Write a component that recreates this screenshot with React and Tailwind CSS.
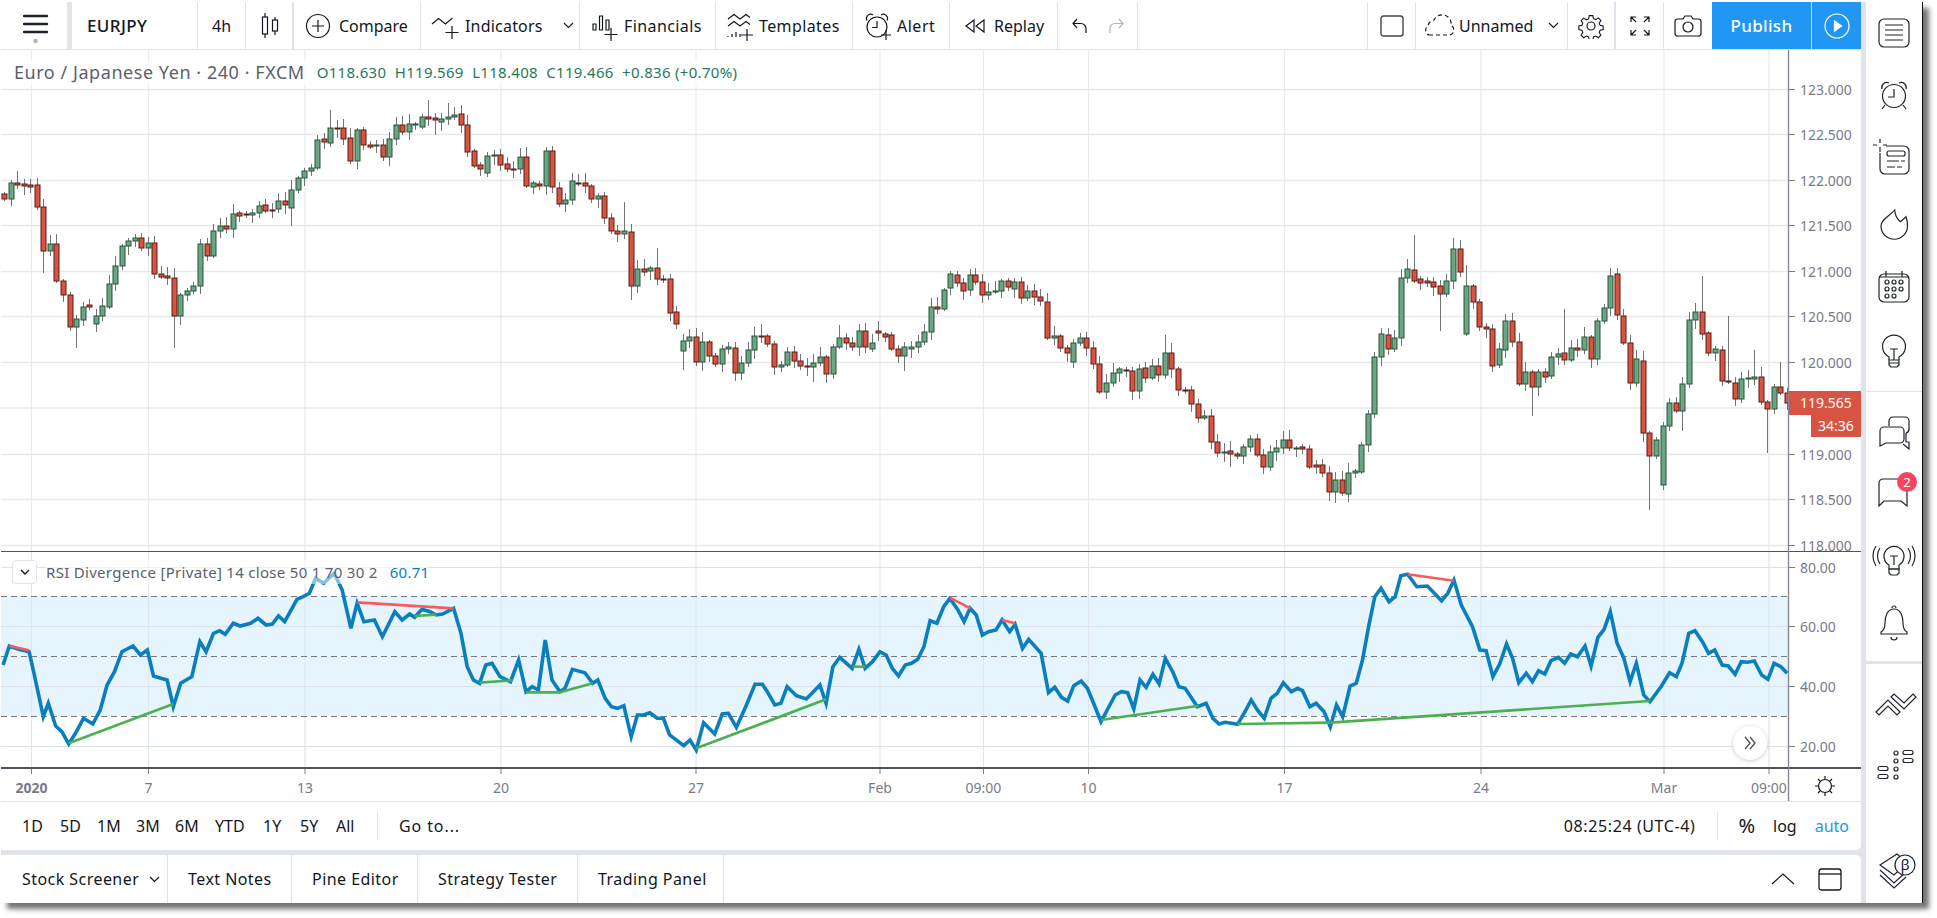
import React from "react";

/* candle data: top,bottom,colour — page pixel y */
const LEFT = "r194-199 g183-199 r183-185 r184-186 r185-187 r185-207 r207-251 g244-251 r244-281 r281-295 r295-327 g319-327 g307-320 r305-307 g316-324 g306-316 g284-307 g266-284 g246-266 g241-246 g238-241 r238-248 g243-248 r243-274 r274-277 r276-278 r278-316 g295-316 g291-295 g286-291 g244-286 r244-256 g231-256 g226-231 r226-229 g214-229 r213-216 r214-215 g213-215 g206-213 r205-211 r210-211 g201-209 r201-205 g190-208 g178-190 g171-178 g168-171 g140-168 r139-142 g128-143 r128-129 r128-139 r138-161 g130-161 r130-145 r145-147 g145-146 r145-157 g139-157 g125-139 r125-132 g124-132 g124-125 g117-127 r117-119 r118-120 g119-122 g117-119 g115-117 r114-125 r125-152 r151-166 r165-169 g156-173 g155-156 r155-165 r164-169 r169-170 g157-169 r157-186 g183-187 r184-186 g151-186 r151-187 r188-204 g200-204 g181-200 r183-184 r183-186 r186-199 g196-199 r196-218 r218-231 r231-234 g231-234 r232-286 g269-286 r269-272 g268-271 r268-279 r279-280 r279-313 r312-324 g341-351 g337-341 r337-362 g342-362 r342-356 r356-364 g349-364 g347-349 r348-373 g363-373 g350-363 g336-350 r336-337 r336-344 r344-367 g365-367 g352-365 r352-361 r361-366 r366-367 g363-367 g357-363 r357-374 g347-374 g338-347 r338-343 r343-347 g331-347 r331-347 g343-349 r331-333 r334-337 r335-349 r349-356 g347-356 g347-349 g342-347 g332-342 g307-332 r307-309 g290-309 g274-288 r275-283 r283-291 g275-290"
  .split(" ");
const RIGHT = "r275-282 r282-295 g292-295 g291-292 g281-291 r281-287 g282-289 r282-298 g291-298 r291-297 r297-301 r302-338 g336-338 r336-348 r348-353 g343-362 g338-343 r338-348 r348-364 r364-392 g383-392 g373-383 g369-373 r370-371 r371-391 g369-391 r368-378 g366-378 r366-375 g353-375 r353-369 r369-390 r390-391 r390-404 r404-418 g416-418 r416-442 r442-453 g452-453 r451-454 r454-456 g447-456 g439-447 r439-455 r455-467 g452-467 g448-452 g440-448 r440-448 g448-449 r447-449 r449-467 r465-467 r465-473 r473-492 g480-492 r480-493 g473-494 g471-473 g445-472 g414-445 g357-414 g334-357 r335-349 g338-349 g278-338 g269-278 r270-281 r279-283 r281-283 r282-287 r286-294 g281-294 g249-281 r249-272 g286-334 r286-302 r302-327 r327-329 r329-366 g349-365 g321-350 r321-342 r342-384 g372-384 r372-387 g372-387 r372-377 g357-376 g354-357 r353-360 g348-360 r348-350 g337-350 r337-359 g321-359 g308-321 g276-308 r274-315 r316-343 r343-383 g359-383 r361-433 r433-456 g440-456 g426-485 g403-426 r403-411 g384-411 g320-384 g312-320 r312-334 r333-353 g349-353 r350-381 r381-382 r383-399 g379-399 g378-379 g377-379 r377-402 r402-409 g387-409 r387-393 r393-403"
  .split(" ");

const parse = (s) => {
  const [a, b] = s.slice(1).split("-").map(Number);
  return { c: s[0], top: a, bot: b };
};
const candles = [
  ...LEFT.map((s, i) => ({ ...parse(s), x: 4.3 + (i * (969.7 - 4.3)) / (LEFT.length - 1) })),
  ...RIGHT.map((s, i) => ({ ...parse(s), x: 975 + (i * (1787 - 975)) / (RIGHT.length - 1) })),
].map((d, i) => ({
  ...d,
  hi: d.top - (2 + ((i * 37) % 9)),
  lo: d.bot + (2 + ((i * 53) % 8)),
}));

const Lz = (x) => x / 1.616;
const Rz = (x) => 970 + x / 1.618;
const extras = [
  [Lz(69), "d", 273], [Lz(122), "d", 348], [Lz(281), "d", 348], [Lz(25), "u", 171], [Lz(470), "d", 226],
  [Lz(533), "u", 110], [Lz(690), "u", 100], [Lz(702), "d", 135], [Lz(722), "u", 103], [Lz(889), "u", 146],
  [Lz(1008), "u", 202], [Lz(1061), "u", 248], [Lz(1020), "d", 300], [Lz(1103), "d", 370], [Lz(1230), "u", 324],
  [Lz(1335), "d", 383], [Lz(1314), "d", 382], [Lz(1190), "d", 381], [Lz(1461), "d", 371], [Lz(1356), "u", 325],
  [Rz(719), "u", 235], [Rz(782), "u", 238], [Rz(804), "u", 265], [Rz(963), "u", 309], [Rz(317), "u", 335],
  [Rz(910), "d", 416], [Rz(1101), "d", 510], [Rz(1120), "d", 490], [Rz(1291), "d", 453], [Rz(591), "d", 503],
  [Rz(1035), "u", 268], [Rz(1185), "u", 276], [Rz(763), "d", 331], [Rz(1228), "u", 316], [Rz(1269), "u", 350],
  [Rz(1312), "u", 362], [Rz(264), "d", 400], [Rz(424), "d", 467], [Rz(1152), "d", 431],
];
extras.forEach(([x, k, y]) => {
  let best = candles[0];
  candles.forEach((c) => {
    if (Math.abs(c.x - x) < Math.abs(best.x - x)) best = c;
  });
  if (k === "u") best.hi = y;
  else best.lo = y;
});

const rsiL = [[5,375],[15,318],[30,328],[47,335],[55,400],[70,530],[78,490],[90,558],[100,575],[111,612],[122,580],[135,535],[150,552],[162,510],[173,435],[185,395],[197,335],[215,318],[227,345],[238,330],[248,408],[260,415],[270,420],[280,500],[292,430],[310,410],[323,305],[333,335],[345,280],[355,272],[364,283],[377,250],[388,258],[405,250],[417,235],[430,255],[440,252],[450,228],[460,245],[480,178],[490,170],[500,160],[510,115],[523,130],[540,100],[553,150],[567,265],[577,190],[588,245],[605,240],[618,290],[638,215],[650,240],[662,222],[670,232],[682,208],[695,215],[705,225],[715,222],[733,205],[745,280],[755,380],[765,420],[775,430],[785,375],[795,370],[808,410],[825,425],[838,360],[850,455],[860,440],[870,450],[881,300],[892,420],[905,455],[913,445],[925,388],[945,398],[958,430],[966,420],[978,475],[988,500],[998,505],[1008,497],[1020,590],[1030,525],[1040,525],[1050,518],[1062,535],[1072,535],[1082,585],[1105,617],[1115,600],[1125,630],[1137,548],[1155,582],[1167,522],[1177,520],[1190,562],[1205,500],[1220,433],[1232,433],[1240,455],[1252,495],[1262,490],[1272,440],[1287,467],[1303,477],[1325,435],[1335,490],[1346,380],[1357,352],[1377,385],[1388,328],[1398,385],[1410,365],[1422,335],[1432,345],[1442,385],[1452,408],[1463,375],[1473,370],[1483,358],[1493,320],[1503,242],[1514,250],[1525,200],[1535,175],[1548,210],[1558,245]];
const rsiR = [[0,205],[10,225],[20,285],[30,275],[42,270],[52,240],[64,275],[73,253],[85,325],[95,298],[115,340],[127,458],[137,442],[148,472],[158,483],[168,437],[180,423],[190,445],[200,490],[212,545],[222,510],[235,465],[245,455],[255,458],[265,507],[275,420],[285,442],[296,403],[306,432],[316,355],[328,395],[338,440],[348,445],[368,500],[382,490],[393,535],[403,552],[413,547],[433,553],[445,515],[455,480],[465,510],[476,535],[487,475],[497,460],[507,428],[520,455],[530,445],[538,452],[550,500],[560,490],[573,515],[583,560],[593,495],[603,530],[615,438],[625,430],[635,360],[645,260],[655,170],[665,145],[678,185],[688,170],[697,107],[708,103],[723,140],[740,138],[763,182],[773,160],[783,120],[795,195],[813,260],[825,330],[835,332],[846,410],[857,372],[868,312],[878,355],[888,428],[900,400],[910,425],[920,392],[930,402],[940,362],[952,352],[962,370],[972,342],[983,350],[995,318],[1005,378],[1016,292],[1026,268],[1036,215],[1047,310],[1058,355],[1068,425],[1078,370],[1090,465],[1100,485],[1118,440],[1132,398],[1143,410],[1152,370],[1163,280],[1173,272],[1185,305],[1195,340],[1205,330],[1217,375],[1227,378],[1238,403],[1248,365],[1258,367],[1269,363],[1281,405],[1291,418],[1301,370],[1312,380],[1322,400]];
const yZ = (y) => 540 + y / 3;
const rsiPts = [
  ...rsiL.map(([x, y]) => `${Lz(x).toFixed(1)},${yZ(y).toFixed(1)}`),
  ...rsiR.map(([x, y]) => `${Rz(x).toFixed(1)},${yZ(y).toFixed(1)}`),
].join(" ");

const seg = (a, b, c, d, f) => [f(a), yZ(b), f(c), yZ(d)];
const redLines = [seg(15, 318, 47, 331, Lz), seg(577, 187, 733, 205, Lz), seg(1535, 173, 1568, 205, Lz), seg(52, 240, 73, 250, Rz), seg(708, 103, 783, 122, Rz)];
const greenLines = [seg(111, 610, 280, 492, Lz), seg(670, 228, 705, 224, Lz), seg(775, 428, 828, 421, Lz), seg(850, 457, 905, 457, Lz), seg(905, 457, 958, 430, Lz), seg(1125, 625, 1335, 478, Lz), seg(1378, 380, 1398, 380, Lz), seg(212, 540, 370, 497, Rz), seg(433, 552, 583, 548, Rz), seg(583, 548, 1100, 483, Rz)];

const vGrid = [31.5, 148.5, 305, 501, 696, 880, 983.5, 1088.5, 1284.5, 1481, 1664, 1769];
const timeLabels = ["2020", "7", "13", "20", "27", "Feb", "09:00", "10", "17", "24", "Mar", "09:00"];
const gridY = [89.5, 134.5, 180.5, 225.5, 271.5, 316.5, 362.5, 408, 454.5, 499.5, 545.5];
const prices = [["123.000", 89.5], ["122.500", 134.5], ["122.000", 180.5], ["121.500", 225.5], ["121.000", 271.5], ["120.500", 316.5], ["120.000", 362.5], ["119.000", 454.5], ["118.500", 499.5], ["118.000", 545.5]];
const rsiTicks = [["80.00", 567.5], ["60.00", 626.5], ["40.00", 686.5], ["20.00", 746.5]];

const Chart = () => (
  <svg width="1860" height="751" viewBox="1 50 1860 751" className="block">
    {vGrid.map((x) => (
      <line key={x} x1={x} x2={x} y1="50" y2="768" stroke="#e8eaee" strokeWidth="1.2" />
    ))}
    {gridY.map((y) => (
      <line key={y} x1="1" x2="1788" y1={y} y2={y} stroke="#e8e9ec" strokeWidth="1.4" />
    ))}
    {candles.map((c, i) => {
      const up = c.c === "g";
      const x = Math.round(c.x) + 0.5;
      return (
        <g key={i}>
          <line x1={x} x2={x} y1={c.hi} y2={c.lo} stroke="#737375" strokeWidth="1" />
          <rect x={x - 2.5} y={c.top} width="5" height={Math.max(c.bot - c.top, 1)} fill={up ? "#6ba583" : "#d75442"} stroke={up ? "#225437" : "#5b1a13"} strokeWidth="1" />
        </g>
      );
    })}
    {/* RSI pane */}
    <rect x="1" y="552" width="1787" height="216" fill="#ffffff" />
    <rect x="1" y="596" width="1787" height="120" fill="#e6f4fe" />
    {vGrid.map((x) => (
      <line key={x} x1={x} x2={x} y1="552" y2="768" stroke="#e1e5ec" strokeWidth="1.2" />
    ))}
    {rsiTicks.map(([t, y]) => (
      <line key={t} x1="1" x2="1788" y1={y} y2={y} stroke="#dde2ea" strokeWidth="1.2" />
    ))}
    {[596, 656, 716].map((y) => (
      <line key={y} x1="1" x2="1788" y1={y + 0.5} y2={y + 0.5} stroke="#787b86" strokeWidth="1.2" strokeDasharray="6 4" />
    ))}
    <polyline points={rsiPts} fill="none" stroke="#0a7fbe" strokeWidth="3.6" strokeLinejoin="miter" />
    {redLines.map((l, i) => (
      <line key={i} x1={l[0]} y1={l[1]} x2={l[2]} y2={l[3]} stroke="#f75b5b" strokeWidth="2.6" />
    ))}
    {greenLines.map((l, i) => (
      <line key={i} x1={l[0]} y1={l[1]} x2={l[2]} y2={l[3]} stroke="#4caf50" strokeWidth="2.6" />
    ))}
    {/* dividers */}
    <line x1="1" x2="1861" y1="551.5" y2="551.5" stroke="#50535e" strokeWidth="1" />
    <line x1="1" x2="1861" y1="768" y2="768" stroke="#50535e" strokeWidth="2" />
    <line x1="1788.5" x2="1788.5" y1="50" y2="801" stroke="#868993" strokeWidth="1.4" />
    {/* price axis */}
    {[...prices, ...rsiTicks].map(([t, y]) => (
      <g key={t}>
        <line x1="1789" x2="1795" y1={y} y2={y} stroke="#787b86" />
        <text x="1800" y={y + 5} fontSize="14" fill="#787b86">{t}</text>
      </g>
    ))}
    {/* time axis */}
    {vGrid.map((x, i) => (
      <g key={i}>
        <line x1={x} x2={x} y1="769" y2="774" stroke="#787b86" />
        <text x={x} y="793" fontSize="14" textAnchor="middle" fill="#787b86" fontWeight={i === 0 ? 700 : 400}>{timeLabels[i]}</text>
      </g>
    ))}
    {/* sun */}
    <g transform="translate(1825 786)" fill="none" stroke="#131722" strokeWidth="1.2">
      <circle r="6.5" />
      <path d="M0-10v3M0 7v3M-10 0h3M7 0h3M-7-7l2 2M5 5l2 2M-7 7l2-2M5-5l2-2" />
    </g>
  </svg>
);

const Ic = ({ w = 28, h = 28, sw = 1.2, c = "#131722", children }) => (
  <svg width={w} height={h} viewBox={`0 0 ${w} ${h}`} fill="none" stroke={c} strokeWidth={sw} className="shrink-0">
    {children}
  </svg>
);

const Item = ({ cls, children }) => (
  <div className={`flex items-center h-full border-r border-[#e0e3eb] shrink-0 ${cls}`}>{children}</div>
);

const Chev = () => (
  <svg width="11" height="7" viewBox="0 0 11 7" fill="none" stroke="#131722" strokeWidth="1.1"><path d="M1 1l4.5 4.5L10 1" /></svg>
);

const Alarm = ({ plus }) => (
  <>
    <circle cx="13" cy="16" r="10" />
    <path d="M13 10v6.5H8" />
    <path d="M3 9.5a4.2 4.2 0 0 1 6-5.5M23 9.5a4.2 4.2 0 0 0-6-5.5" />
    {plus ? <path d="M22 19v10M17 24h10" /> : <path d="M6 24l-2 3M20 24l2 3" />}
  </>
);

const Toolbar = () => (
  <div className="flex items-center h-[47px] bg-white text-[16px] text-[#131722]">
    <div className="w-[66px] h-full flex flex-col items-center shrink-0">
      <svg width="26" height="30" viewBox="0 0 26 30" className="mt-[12px] ml-[3px]" fill="none">
        <path d="M1 2h23M1 10h23M1 18h23" stroke="#1e222d" strokeWidth="2.4" strokeLinecap="round" />
        <circle cx="12.5" cy="27" r="2.2" fill="#b2b5be" />
      </svg>
    </div>
    <div className="w-[5px] h-full bg-[#e0e3eb] shrink-0" />
    <Item cls="w-[126px] pl-[15px] font-medium"><span className="text-[17px] tracking-[0.4px]">EURJPY</span></Item>
    <Item cls="w-[48px] pl-[14px]"><span>4h</span></Item>
    <div className="flex items-center h-full border-r-2 border-[#e0e3eb] shrink-0 w-[48px] pl-[15px]">
      <Ic w={18} h={27}>
        <path d="M4 1v25M14 5v18" />
        <rect x="1.5" y="5" width="5" height="17" fill="#fff" />
        <rect x="11.5" y="8" width="5" height="11" fill="#fff" />
      </Ic>
    </div>
    <Item cls="w-[127px] pl-[11px] gap-[8px]">
      <Ic w={26} h={26}><circle cx="13" cy="13" r="11.5" /><path d="M13 7v12M7 13h12" /></Ic>
      <span>Compare</span>
    </Item>
    <Item cls="w-[159px] pl-[9px]">
      <Ic w={30} h={30}><path d="M2 13l6.5-5.5 7 5.5 7-6" /><path d="M22 15v13M15.5 21.5h13" /></Ic>
      <span className="ml-[5px] tracking-[0.2px]">Indicators</span>
      <span className="ml-[20px]"><Chev /></span>
    </Item>
    <Item cls="w-[136px] pl-[11px]">
      <Ic w={30} h={32}><path d="M2 14h3v6H2zM8.5 6h3v14h-3zM15 10h3v10h-3z" /><path d="M20 18v13M13.5 24.5h13" /></Ic>
      <span className="ml-[3px] tracking-[0.4px]">Financials</span>
    </Item>
    <Item cls="w-[137px] pl-[10px]">
      <Ic w={30} h={32}><path d="M2 9l6-4.5 6 4.5 6-4.5 4 3M2 16l6-4.5 6 4.5 6-4.5 4 3" /><path d="M2 26v1M6 24v3M10 22v5M14 24v3" /><path d="M21 19v12M15 25h12" /></Ic>
      <span className="ml-[3px] tracking-[0.4px]">Templates</span>
    </Item>
    <Item cls="w-[97px] pl-[11px]">
      <Ic w={30} h={30}><Alarm plus /></Ic>
      <span className="ml-[3px] tracking-[0.5px]">Alert</span>
    </Item>
    <Item cls="w-[108px] pl-[13px]">
      <Ic w={24} h={18}><path d="M11 3L3 9l8 6zM21 3l-8 6 8 6z" /></Ic>
      <span className="ml-[7px]">Replay</span>
    </Item>
    <Item cls="w-[80px] pl-[13px] gap-[18px]">
      <Ic w={18} h={18}><path d="M6 2L2 6.5 6 11M2 6.5h8a5 5 0 0 1 5 5V16" /></Ic>
      <Ic w={18} h={18} c="#b2b5be"><path d="M12 2l4 4.5L12 11M16 6.5H8a5 5 0 0 0-5 5V16" /></Ic>
    </Item>
    <div className="flex-1 h-full border-r border-[#e0e3eb]" />
    <Item cls="w-[48px] justify-center">
      <Ic w={24} h={22} c="#434651" sw={1.4}><rect x="1" y="1" width="22" height="20" rx="2.5" /></Ic>
    </Item>
    <Item cls="w-[152px] pl-[7px]">
      <Ic w={32} h={24}>
        <path d="M6 21h20a5 5 0 0 0 2-9.5A9 9 0 0 0 11 6 7 7 0 0 0 5 12a5 5 0 0 0 1 9z" strokeDasharray="4 3" />
      </Ic>
      <span className="ml-[4px]">Unnamed</span>
      <span className="ml-[15px]"><Chev /></span>
    </Item>
    <div className="flex items-center justify-center h-full border-r-2 border-[#e0e3eb] shrink-0 w-[48px]">
      <Ic w={26} h={26}>
        <path d="M11 1.5h4l.7 3.4 2.5 1 2.9-1.9 2.9 2.9-1.9 2.9 1 2.5 3.4.7v4l-3.4.7-1 2.5 1.9 2.9-2.9 2.9-2.9-1.9-2.5 1-.7 3.4h-4l-.7-3.4-2.5-1-2.9 1.9-2.9-2.9 1.9-2.9-1-2.5-3.4-.7v-4l3.4-.7 1-2.5L2 7.1 4.9 4.2l2.9 1.9 2.5-1z" transform="translate(1.3 1.3) scale(.9)" />
        <circle cx="13" cy="13" r="4" />
      </Ic>
    </div>
    <Item cls="w-[48px] justify-center">
      <Ic w={22} h={22}><path d="M2 7V2h5M2 2l5 5M15 2h5v5M20 2l-5 5M7 20H2v-5M2 20l5-5M20 15v5h-5M20 20l-5-5" /></Ic>
    </Item>
    <div className="w-[48px] h-full flex items-center justify-center shrink-0">
      <Ic w={28} h={24}><path d="M9 5l2-3h6l2 3h5.5A2.5 2.5 0 0 1 27 7.5v12a2.5 2.5 0 0 1-2.5 2.5h-21A2.5 2.5 0 0 1 1 19.500v-12A2.500 2.500 0 0 1 3.500 5z" /><circle cx="14" cy="13" r="5" /></Ic>
    </div>
    <div className="w-[100px] h-full bg-[#2196f3] text-white flex items-center justify-center font-medium tracking-[0.3px] text-[17px] border-r border-[#bfe0fb] shrink-0">Publish</div>
    <div className="w-[49px] h-full bg-[#2196f3] flex items-center justify-center shrink-0">
      <Ic w={26} h={26} c="#fff"><circle cx="13" cy="13" r="12" /><path d="M10.500 8l7 5-7 5z" fill="#fff" /></Ic>
    </div>
  </div>
);

const ranges = [
  ["1D", "w-[38px]"], ["5D", "w-[37px]"], ["1M", "w-[39px]"], ["3M", "w-[39px]"], ["6M", "w-[40px]"],
  ["YTD", "w-[48px]"], ["1Y", "w-[37px]"], ["5Y", "w-[36px]"], ["All", "w-[21px]"],
];

const RangeBar = () => (
  <div className="flex items-center h-[48px] pl-[21px] pr-[12px] bg-white rounded-br-[5px] text-[16px] text-[#131722]">
    <div className="flex">
      {ranges.map(([r, w]) => <span key={r} className={w}>{r}</span>)}
    </div>
    <div className="w-px h-[28px] bg-[#e0e3eb] ml-[20px]" />
    <span className="ml-[21px] tracking-[0.9px]">Go to...</span>
    <span className="ml-auto tracking-[0.6px]">08:25:24 (UTC-4)</span>
    <div className="w-px h-[28px] bg-[#e0e3eb] ml-[22px]" />
    <span className="ml-[20px] text-[20px]">%</span>
    <span className="ml-[18px]">log</span>
    <span className="ml-[18px] text-[#2196f3]">auto</span>
  </div>
);

const tabs = [
  ["Stock Screener", "w-[167px] pl-[21px]", true],
  ["Text Notes", "w-[124px] pl-[20px]"],
  ["Pine Editor", "w-[126px] pl-[20px]"],
  ["Strategy Tester", "w-[160px] pl-[20px]"],
  ["Trading Panel", "w-[146px] pl-[20px]"],
];

const BottomTabs = () => (
  <div className="flex items-center h-[48px] bg-white rounded-tr-[5px] text-[16px] tracking-[0.45px] text-[#131722]">
    {tabs.map(([t, cls, chev]) => (
      <Item key={t} cls={cls}>
        <span>{t}</span>
        {chev ? <span className="ml-[10px]"><Chev /></span> : null}
      </Item>
    ))}
    <div className="ml-auto flex items-center gap-[23px] pr-[19px]">
      <Ic w={24} h={12}><path d="M1 11L12 1l11 10" /></Ic>
      <Ic w={24} h={24} sw={1.3}><rect x="1" y="2" width="22" height="21" rx="2.500" /><path d="M1 7h22" /></Ic>
    </div>
  </div>
);

const Side = ({ cls, children }) => (
  <div className={`relative w-full h-[40px] flex items-center justify-center shrink-0 ${cls}`}>
    <svg width="40" height="40" viewBox="0 0 40 40" fill="none" stroke="#1e222d" strokeWidth="1.2" className="overflow-visible">{children}</svg>
  </div>
);

const Bulb = () => (
  <>
    <path d="M15 28v-3a11.500 11.500 0 1 1 10 0v3" />
    <path d="M15 28h10v5l-2 2h-6l-2-2zM15 31h10" />
    <path d="M20 28v-11M16 17h8" />
  </>
);

const Sidebar = () => (
  <div className="w-[56px] h-full bg-white flex flex-col shrink-0 border-0">
    <Side cls="mt-[11px]">
      <rect x="5" y="6" width="30" height="28" rx="5" />
      <path d="M11 12h18M11 17h18M11 22h18M11 27h18" />
    </Side>
    <Side cls="mt-[22px]">
      <circle cx="20" cy="21" r="11.500" />
      <path d="M20 14v8h-6" />
      <path d="M8 14a5 5 0 0 1 7-6M32 14a5 5 0 0 0-7-6M11 30l-3 4M29 30l3 4" />
    </Side>
    <Side cls="mt-[25px]">
      <path d="M12 6h18a5 5 0 0 1 5 5v18a5 5 0 0 1-5 5H11a5 5 0 0 1-5-5V13" />
      <path d="M-1 5h4M9 5h4M6-1v4M6 7v5" />
      <rect x="13" y="11" width="18" height="5" rx="2" />
      <path d="M13 21h12M27 21h4M13 27h8M23 27h5" />
    </Side>
    <Side cls="mt-[25px]">
      <path d="M20.700 5C21 10 23 14 26.300 16.700 28.500 15 31 13 32 11.700 33 14 33.500 18 33.500 21A13.250 13.250 0 1 1 7 21C7 14 16 11 20.700 5z" />
    </Side>
    <Side cls="mt-[22px]">
      <rect x="5" y="7" width="30" height="28" rx="5" />
      <path d="M12 4v6M28 4v6M5 10h30" />
      {[13, 20, 27].map((x) => [15, 22, 29].map((y) => (x === 27 && y === 29 ? null : <circle key={`${x}${y}`} cx={x} cy={y} r="2" />)))}
    </Side>
    <Side cls="mt-[25px]"><Bulb /></Side>
    <div className="h-px bg-[#e0e3eb] mt-[19px] shrink-0" />
    <Side cls="mt-[21px]">
      <path d="M15 13V8a4 4 0 0 1 4-4h12a4 4 0 0 1 4 4v8a4 4 0 0 1-3 4" />
      <path d="M10 14h16a4 4 0 0 1 4 4v8a4 4 0 0 1-4 4H12l-6 3V18a4 4 0 0 1 4-4z" fill="#fff" />
      <path d="M32 20v9h3v7l-6-5" />
    </Side>
    <div className="relative shrink-0 mt-[20px]">
      <Side cls="">
        <path d="M9 6h20a4 4 0 0 1 4 4v23l-6-5H10l-5 5V10a4 4 0 0 1 4-4z" />
      </Side>
      <div className="absolute left-[31px] top-[-1px] w-[20px] h-[20px] rounded-full bg-[#f7435f] text-white text-[13px] leading-[20px] text-center">2</div>
    </div>
    <Side cls="mt-[25px]">
      <path d="M15 27a10 10 0 1 1 10 0v4H15z" />
      <path d="M16 18h8M20 18v9M15 31h10v4l-2 2h-6l-2-2z" />
      <path d="M6 10a14 14 0 0 0 0 16M2 8a18 18 0 0 0 0 20M34 10a14 14 0 0 1 0 16M38 8a18 18 0 0 1 0 20" />
    </Side>
    <Side cls="mt-[25px]">
      <path d="M20 6c-7 0-9 8-9 14 0 5-2 8-4 9v2h26v-2c-2-1-4-4-4-9 0-6-2-14-9-14z" />
      <path d="M17 34a3 3 0 0 0 6 0M18 5a2 2 0 0 1 4 0" />
    </Side>
    <div className="h-[3px] bg-[#e0e3eb] mt-[18px] shrink-0" />
    <Side cls="mt-[19px]">
      <path d="M2 29L14 17l12 12-3 3-9-9-9 9z" />
      <path d="M17 14l3-3 10 9 9-9 3 3-12 12z" />
    </Side>
    <Side cls="mt-[24px]">
      <circle cx="22" cy="6" r="2" /><circle cx="22" cy="14" r="2" /><circle cx="22" cy="22" r="2" /><circle cx="22" cy="30" r="2" />
      <rect x="29" y="3.500" width="10" height="4" rx="2" />
      <rect x="29" y="11.500" width="10" height="4" rx="2" />
      <rect x="4" y="19.500" width="10" height="4" rx="2" />
      <rect x="4" y="27.500" width="10" height="4" rx="2" />
    </Side>
    <Side cls="mt-[63px]">
      <path d="M6 15L23 4l10 9-13 12z" />
      <path d="M6 20l14 13 12-11M6 25l14 13 12-11" />
      <circle cx="31" cy="15" r="10" fill="#fff" />
      <text x="31" y="20" fontSize="15" textAnchor="middle" fill="#1e222d" stroke="none">β</text>
    </Side>
  </div>
);

export default function App() {
  return (
    <div className="w-[1937px] h-[918px] bg-white overflow-hidden font-['Noto_Sans',sans-serif] pt-[2px] pl-[1px]">
      <div className="w-[1922px] h-[901px] flex bg-[#e0e3eb] border-r border-[#111] shadow-[6px_6px_5px_rgba(0,0,0,0.55)]">
        <div className="w-[1860px] h-full flex flex-col shrink-0">
          <Toolbar />
          <div className="h-px bg-[#e0e3eb]" />
          <div className="relative bg-white h-[751px]">
            <Chart />
            <div className="absolute left-[13px] top-[9px] flex items-center gap-[12px] bg-white/70 whitespace-nowrap">
              <span className="text-[18px] tracking-[0.55px] text-[#5d606b]">Euro / Japanese Yen · 240 · FXCM</span>
              <span className="text-[15px] tracking-[0.3px] text-[#1f7a5c]">O118.630&nbsp; H119.569&nbsp; L118.408&nbsp; C119.466&nbsp; +0.836 (+0.70%)</span>
            </div>
            <div className="absolute left-[11px] top-[510px] w-[25px] h-[24px] rounded-[4px] border border-[#e0e3eb] bg-white flex items-center justify-center">
              <svg width="10" height="7" viewBox="0 0 10 7" fill="none" stroke="#131722" strokeWidth="1.4"><path d="M1 1l4 4 4-4" /></svg>
            </div>
            <div className="absolute left-[45px] top-[510px] flex gap-[12px] items-center bg-white/50 text-[15px] tracking-[0.3px] text-[#5d606b] whitespace-nowrap h-[24px]">
              <span>RSI Divergence [Private] 14 close 50 1 70 30 2</span>
              <span className="text-[#0a7fbe]">60.71</span>
            </div>
            <div className="absolute left-[1788px] top-[341px] w-[72px] h-[24px] bg-[#d75442] text-white text-[14px] leading-[24px] pl-[11px]">119.565</div>
            <div className="absolute left-[1810px] top-[365px] w-[50px] h-[22px] bg-[#d75442] text-white text-[14px] leading-[22px] text-center">34:36</div>
            <div className="absolute left-[1732px] top-[676px] w-[34px] h-[34px] rounded-full bg-white shadow-[0_1px_4px_rgba(0,0,0,0.2)] flex items-center justify-center">
              <svg width="14" height="14" viewBox="0 0 14 14" fill="none" stroke="#50535e" strokeWidth="1.4"><path d="M2 1l5 6-5 6M7 1l5 6-5 6" /></svg>
            </div>
          </div>
          <div className="h-px bg-[#e0e3eb]" />
          <RangeBar />
          <div className="h-[5px] shrink-0" />
          <BottomTabs />
        </div>
        <div className="w-[5px] shrink-0" />
        <Sidebar />
      </div>
    </div>
  );
}
